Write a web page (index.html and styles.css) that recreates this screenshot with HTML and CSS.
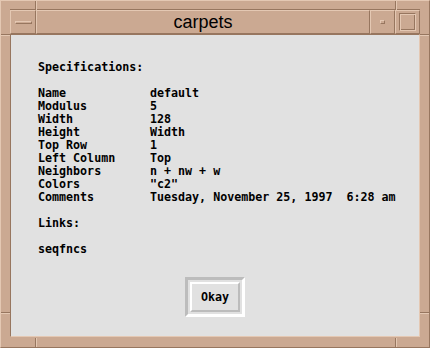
FILE: index.html
```html
<!DOCTYPE html>
<html lang="en">
<head>
  <meta charset="UTF-8" />
  <title>carpets</title>
  <link rel="stylesheet" href="styles.css">
</head>
<body>
  <div class="window">
    <!-- resize handle marks on the frame -->
    <span class="mark mark-v" style="left:34px; top:0"></span>
    <span class="mark mark-v" style="left:394px; top:0"></span>
    <span class="mark mark-v" style="left:34px; bottom:0"></span>
    <span class="mark mark-v" style="left:394px; bottom:0"></span>
    <span class="mark mark-h" style="left:0; top:33px"></span>
    <span class="mark mark-h" style="right:0; top:33px"></span>
    <span class="mark mark-h" style="left:0; top:311px"></span>
    <span class="mark mark-h" style="right:0; top:311px"></span>

    <div class="titlebar">
      <div class="tbtn menu-btn"><span class="menu-glyph"></span></div>
      <div class="title">carpets</div>
      <div class="tbtn"><span class="min-glyph"></span></div>
      <div class="tbtn"><span class="max-glyph"></span></div>
    </div>

    <div class="content">
      <div class="specs">
        <div class="line">Specifications:</div>
        <div class="line"></div>
        <div class="row"><span class="key">Name</span><span>default</span></div>
        <div class="row"><span class="key">Modulus</span><span>5</span></div>
        <div class="row"><span class="key">Width</span><span>128</span></div>
        <div class="row"><span class="key">Height</span><span>Width</span></div>
        <div class="row"><span class="key">Top Row</span><span>1</span></div>
        <div class="row"><span class="key">Left Column</span><span>Top</span></div>
        <div class="row"><span class="key">Neighbors</span><span>n + nw + w</span></div>
        <div class="row"><span class="key">Colors</span><span>"c2"</span></div>
        <div class="row"><span class="key">Comments</span><span>Tuesday, November 25, 1997&nbsp; 6:28 am</span></div>
        <div class="line"></div>
        <div class="line">Links:</div>
        <div class="line"></div>
        <div class="line">seqfncs</div>
      </div>

      <div class="actions">
        <div class="ok-ring">
          <button class="ok-btn">Okay</button>
        </div>
      </div>
    </div>
  </div>
</body>
</html>
```

FILE: styles.css
```css
* {
  box-sizing: border-box;
}
body {
  margin: 0;
  background: #cba992;
}
.window {
  position: relative;
  width: 430px;
  height: 348px;
  background: #cba992;
  border-top: 1px solid #e4c8b3;
  border-left: 1px solid #e4c8b3;
  border-right: 1px solid #97765f;
  border-bottom: 1px solid #97765f;
  padding: 8px 9px 10px 9px;
  display: flex;
  flex-direction: column;
}
.mark {
  position: absolute;
  display: block;
}
.mark-v {
  width: 2px;
  height: 9px;
  border-left: 1px solid #97765f;
  border-right: 1px solid #e4c8b3;
}
.mark-h {
  width: 9px;
  height: 2px;
  border-top: 1px solid #97765f;
  border-bottom: 1px solid #e4c8b3;
}

/* Title bar */
.titlebar {
  display: flex;
  height: 25px;
  border-top: 1px solid #97765f;
}
.tbtn {
  width: 25px;
  display: flex;
  align-items: center;
  justify-content: center;
  border-top: 1px solid #e4c8b3;
  border-left: 1px solid #e4c8b3;
  border-right: 1px solid #97765f;
  border-bottom: 1px solid #97765f;
}
.menu-btn {
  width: 26px;
}
.title {
  flex: 1;
  text-align: center;
  font-family: "Liberation Sans", Arial, sans-serif;
  font-size: 18px;
  line-height: 22px;
  color: #000;
  border-top: 1px solid #e4c8b3;
  border-left: 1px solid #e4c8b3;
  border-right: 1px solid #97765f;
  border-bottom: 1px solid #97765f;
}
.menu-glyph {
  width: 17px;
  height: 3px;
  border-top: 1px solid #e4c8b3;
  border-left: 1px solid #e4c8b3;
  border-right: 1px solid #97765f;
  border-bottom: 1px solid #97765f;
}
.min-glyph {
  width: 5px;
  height: 4px;
  border-top: 1px solid #e4c8b3;
  border-left: 1px solid #e4c8b3;
  border-right: 1px solid #97765f;
  border-bottom: 1px solid #97765f;
}
.max-glyph {
  width: 17px;
  height: 18px;
  border-top: 1px solid #97765f;
  border-left: 1px solid #97765f;
  border-right: 1px solid #e4c8b3;
  border-bottom: 1px solid #e4c8b3;
  box-shadow: inset 1px 1px 0 #e4c8b3, inset -1px -1px 0 #97765f;
}

/* Dialog body */
.content {
  flex: 1;
  background: #e1e1e1;
  border-top: 1px solid #97765f;
  border-left: 1px solid #97765f;
  border-right: 1px solid #e4c8b3;
  border-bottom: 1px solid #e4c8b3;
  padding: 26px 0 0 27px;
  font-family: "DejaVu Sans Mono", "Liberation Mono", monospace;
  font-weight: bold;
  font-size: 11.67px;
  line-height: 13px;
  color: #000;
}
.line {
  height: 13px;
  white-space: pre;
}
.row {
  display: flex;
  height: 13px;
  white-space: pre;
}
.key {
  width: 112px;
}
.actions {
  display: flex;
  justify-content: center;
  margin-top: 21px;
  padding-right: 27px;
}
.ok-ring {
  width: 60px;
  height: 40px;
  padding: 2px;
  border-top: 3px solid #bcbcbc;
  border-left: 3px solid #bcbcbc;
  border-right: 3px solid #fff;
  border-bottom: 3px solid #fff;
}
.ok-btn {
  width: 100%;
  height: 100%;
  margin: 0;
  padding: 0;
  background: #e1e1e1;
  border-top: 2px solid #fff;
  border-left: 2px solid #fff;
  border-right: 2px solid #bcbcbc;
  border-bottom: 2px solid #bcbcbc;
  font-family: "DejaVu Sans Mono", "Liberation Mono", monospace;
  font-weight: bold;
  font-size: 11.67px;
  color: #000;
}
```
